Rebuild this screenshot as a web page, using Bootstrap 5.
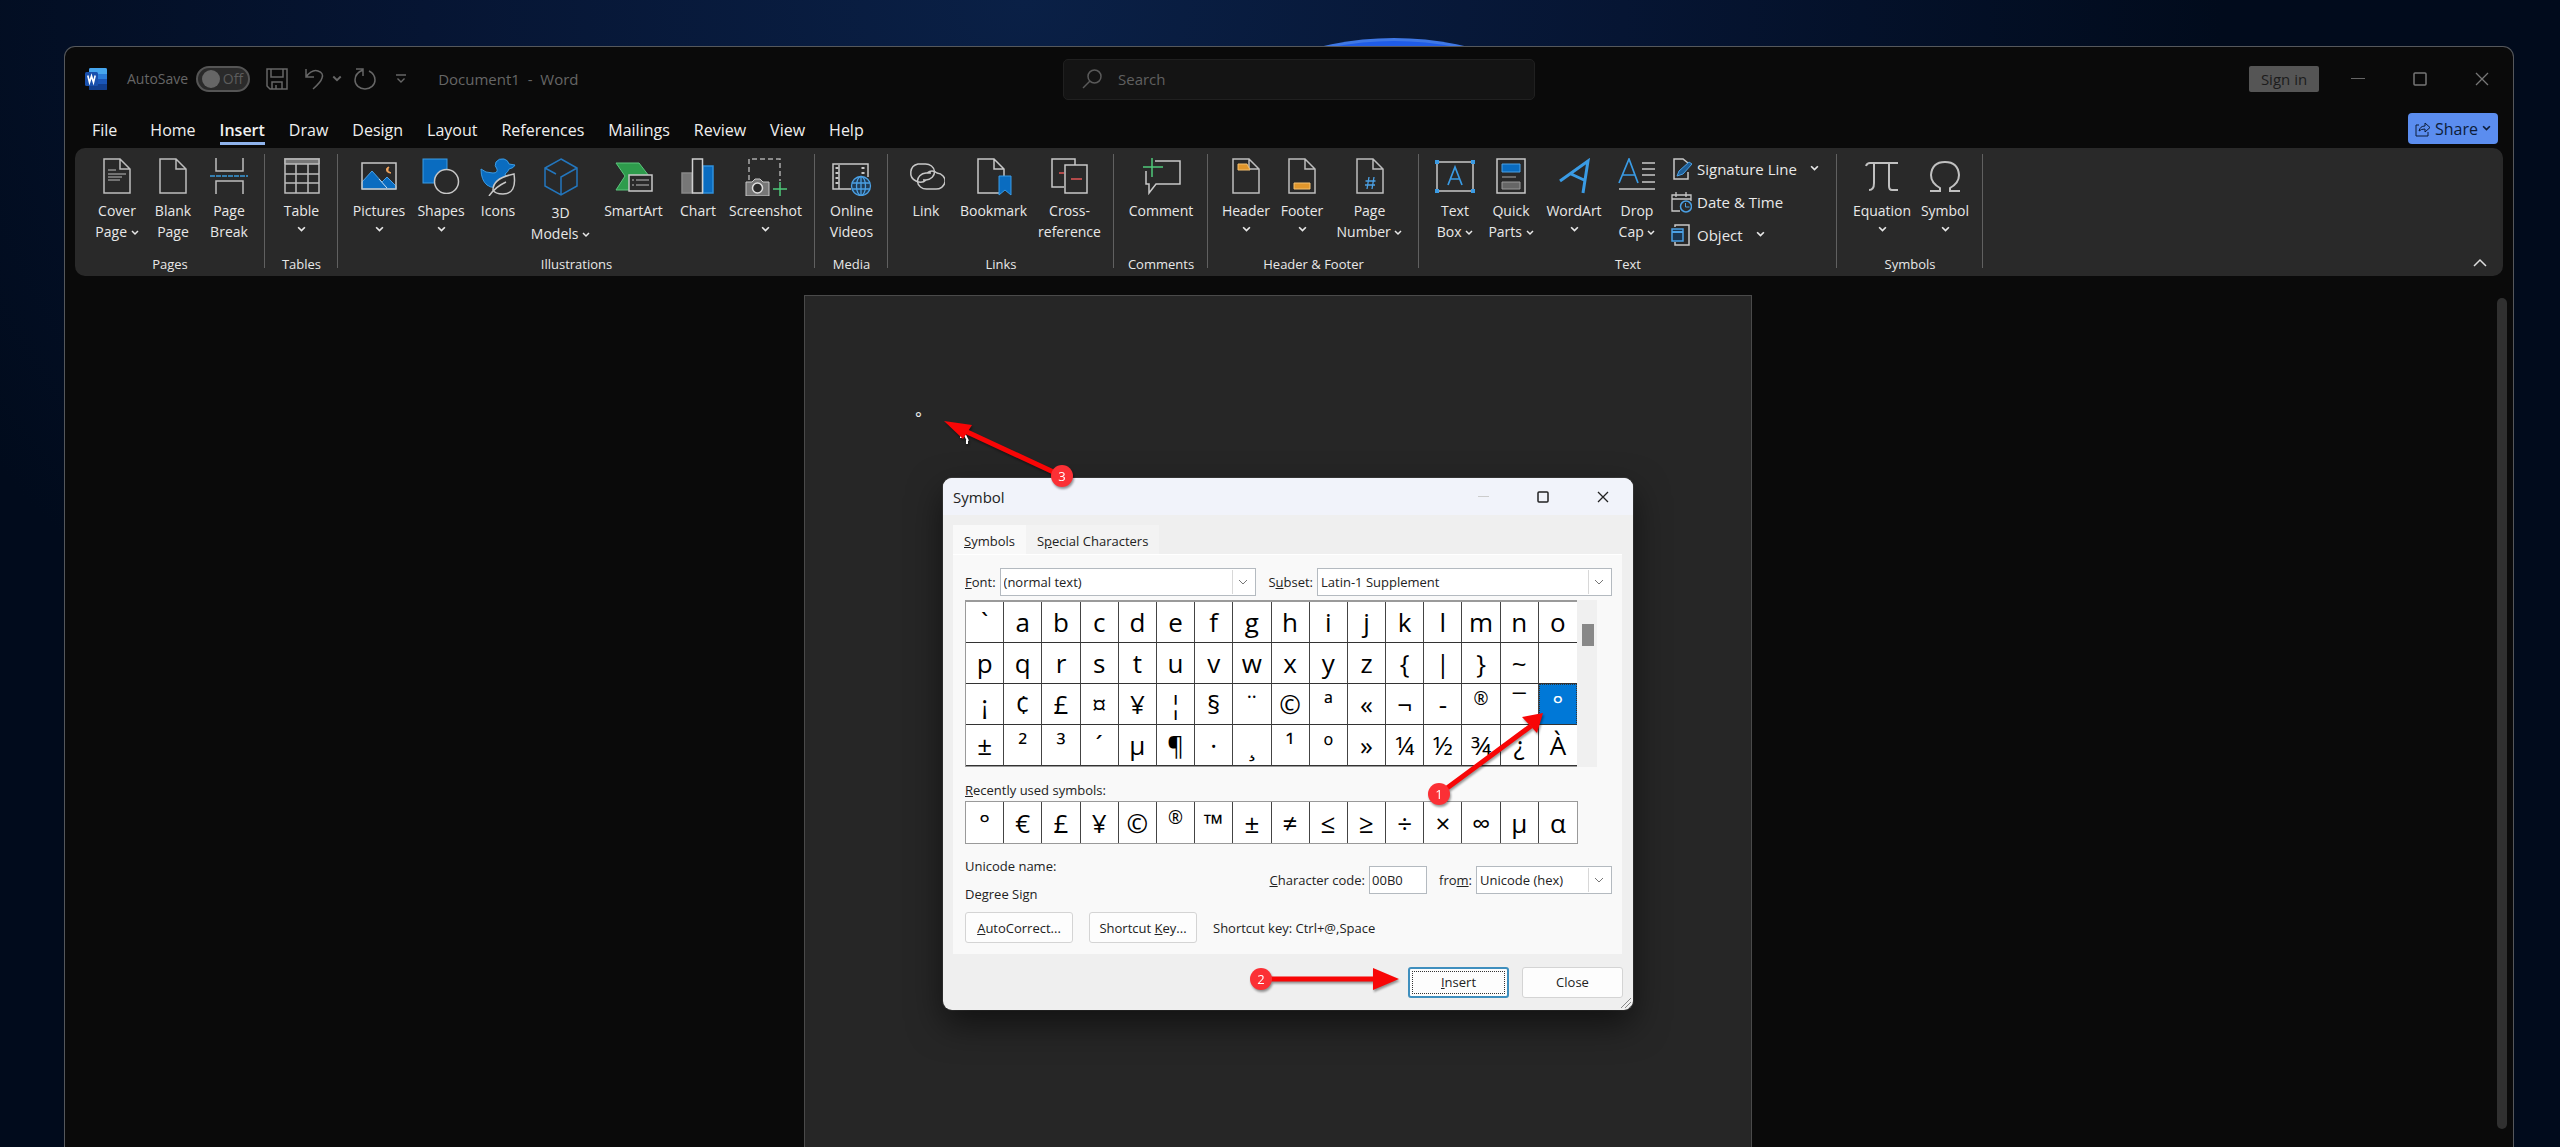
<!DOCTYPE html>
<html lang="en">
<head>
<meta charset="utf-8">
<meta name="viewport" content="width=device-width, initial-scale=1">
<title>Document1 - Word</title>
<link href="https://cdn.jsdelivr.net/npm/bootstrap@5.3.0/dist/css/bootstrap.min.css" rel="stylesheet">
<style>
  body { height: 100vh; overflow: hidden; position: relative; font-family: "Open Sans", "Noto Sans", sans-serif; font-size: 15px; line-height: 20px; color: #e8e8e8;
    background: radial-gradient(ellipse 1200px 900px at 40% 0, #0a2046 0, #061533 50%, #010b1c 100%); }
  button, input, select { font: inherit; }
  .bloom { position: absolute; left: calc(50% - 206px); top: 38px; width: 640px; height: 640px; border-radius: 50%; background: #1f5ce8; border-top: 3px solid #3f78e6; }
  .app { position: relative; margin: 46px 46px 0 64px; height: calc(100vh - 46px); background: #0a0a0a; border: 1px solid #55585c; border-bottom: 0; border-radius: 11px 11px 0 0; }
  .bare { background: none; border: 0; padding: 0; color: inherit; }
  svg { display: block; fill: none; flex: none; }

  .titlebar { display: grid; grid-template-columns: 1fr minmax(240px, 472px) 1fr; align-items: center; height: 64px; padding-left: 20px; color: #666; }
  .autosave { font-size: 14px; }
  .pill { width: 54px; height: 26px; border: 2px solid #555; border-radius: 13px; background: #2a2a2a; padding: 0 5px 0 4px; color: #5c5c5c; }
  .knob { width: 18px; height: 18px; border-radius: 50%; background: #666; }
  .searchbox { height: 41px; background: #141414; border: 1px solid #202020; border-radius: 5px; padding-left: 18px; gap: 16px; }
  .searchbox input { background: none; border: 0; outline: 0; color: #666; padding: 0; }
  .searchbox input::placeholder { color: #606060; opacity: 1; }
  .docname { white-space: pre; }
  .signin { background: #555; color: #1c1c1c; border: 0; border-radius: 2px; height: 26px; width: 70px; padding: 0; }
  .wctl { width: 62px; height: 40px; }

  .tabrow { height: 37px; padding: 2px 15px 0 27px; }
  .tabrow .nav { gap: 24px; }
  .tabrow .nav-link { color: #f0f0f0; padding: 0; height: 32px; line-height: 34px; font-size: 16px; }
  .tabrow .nav-link.first { margin-right: 9px; }
  .tabrow .nav-link.active { font-weight: 600; border-bottom: 3px solid #8fb3ec; }
  .share { background: #5b8def; color: #0c1c38; border: 0; border-radius: 4px; width: 90px; height: 31px; font-size: 16px; padding: 0; }

  .ribbon { margin: 0 10px; height: 128px; background: #292929; border-radius: 10px; position: relative; }
  .grp { padding: 10px 8px 0; position: relative; }
  .grp::after { content: ""; position: absolute; right: 0; top: 6px; bottom: 8px; width: 1px; background: #606060; }
  .grp.start { padding-left: 14px; }
  .grp.lead10 { padding-left: 10px; }
  .grp.wide { padding-left: 10px; padding-right: 10px; }
  .grp.solo { padding-left: 0; padding-right: 0; }
  .grp-name { position: absolute; left: 0; right: 0; bottom: 2px; text-align: center; font-size: 13px; }
  .rb { display: flex; flex-direction: column; align-items: center; background: none; border: 0; padding: 0; color: #e8e8e8; font-size: 14px; line-height: 21px; white-space: nowrap; height: 100px; }
  .rb > svg { margin-bottom: 6px; }
  .rb .cv { display: inline-block; }
  .xs { width: 52px; } .s { width: 56px; } .m { width: 62px; } .ml { width: 70px; } .l { width: 73px; } .x { width: 79px; } .xx { width: 94px; }
  .smallbtn { display: flex; align-items: center; height: 33px; background: none; border: 0; padding: 0; gap: 5px; color: #e8e8e8; font-size: 15px; }
  .smallcol { width: 164px; padding-left: 6px; margin-top: -6px; }
  .collapse-btn { position: absolute; right: 16px; bottom: 8px; }

  .paper { width: 948px; margin-top: 19px; background: #262626; border: 1px solid #4a4a4a; border-bottom: 0; padding: 112px 0 0 110px; font-size: 16px; color: #eee; }
  .gutter { width: 22px; padding: 22px 0 18px 6px; }
  .gutter div { width: 10px; height: 100%; border-radius: 5px; background: #303030; }

  .dlg { position: absolute; left: calc(50% - 337px); top: 478px; width: 690px; background: #efefef; border-radius: 9px; color: #222; font-size: 13px; box-shadow: 0 14px 34px rgba(0,0,0,.55), 0 0 0 1px #3a3a3a; }
  .dlg-title { height: 37px; background: #f1f3fa; border-radius: 9px 9px 0 0; padding-left: 10px; font-size: 15px; }
  .dctl { width: 60px; height: 37px; color: #222; }
  .dlg-tabs { padding: 10px 10px 0; }
  .dlg-tab { height: 29px; padding: 2px 11px 0; background: #f3f3f3; border: 0; color: #222; }
  .dlg-tab.on { background: #f9f9f9; }
  .panel { margin: 0 11px 0 10px; padding: 14px 10px 11px 12px; background: #f9f9f9; box-shadow: inset 0 1px #fff; }
  .sel { appearance: none; height: 28px; border: 1px solid #b4bac0; border-radius: 0; color: #222; padding: 0 24px 0 3px;
    background: #fff url("data:image/svg+xml,%3Csvg xmlns='http://www.w3.org/2000/svg' width='24' height='26'%3E%3Cpath d='M1.500 1v24' stroke='%23d8d8d8'/%3E%3Cpath d='M8 11l4 4 4-4' fill='none' stroke='%23777'/%3E%3C/svg%3E") no-repeat right center; }
  .sel-font { width: 256px; } .sel-sub { width: 295px; } .sel-from { width: 136px; }
  .code { width: 58px; height: 28px; border: 1px solid #b4bac0; padding: 0 2px; color: #222; background: #fff; }
  .chars { display: grid; grid-template-columns: repeat(16, 1fr); width: 612px; border: 1px solid #9a9a9a; border-top-width: 2px; border-right: 0; background: #fff; }
  .chars button { height: 41px; background: none; border: 0; border-right: 1px solid #444; border-bottom: 1px solid #333; padding: 0; font-size: 26px; line-height: 40px; color: #000; }
  .chars button:nth-child(16n) { border-right: 0; }
  .chars button.raised { font-size: 18px; line-height: 28px; padding-bottom: 12px; }
  .chars button.picked { background: #0078d7; color: #fff; outline: 1px dotted #333; outline-offset: -1px; }
  .recent { width: 613px; border: 1px solid #9a9a9a; }
  .recent button { border-bottom: 0; }
  .cscroll { width: 20px; background: #f0f0f0; padding: 24px 3px 0 5px; }
  .cscroll div { height: 22px; background: #888; }
  .lbl { line-height: 22px; }
  .names { line-height: 28px; }
  .dbtn { height: 31px; background: #fdfdfd; border: 1px solid #d4d4d4; border-radius: 3px; color: #222; padding: 0; }
  .w-side { width: 108px; } .w-foot { width: 101px; }
  .go { border: 2px solid #3f8fbe; position: relative; }
  .go::after { content: ""; position: absolute; inset: 2px; border: 1px dotted #333; }
  .dlg-foot { height: 56px; padding-right: 10px; gap: 13px; }
  .grip { position: absolute; right: 1px; bottom: 1px; }
  .notes { position: absolute; left: 0; top: 0; overflow: visible; pointer-events: none; filter: drop-shadow(1px 2px 1px rgba(0,0,0,.4)); }
  .notes text { font-size: 13px; fill: #fff; text-anchor: middle; }
</style>
</head>
<body>
<svg width="0" height="0" class="position-absolute" aria-hidden="true">
  <defs>
    <symbol id="cv" viewBox="0 0 8 8"><path d="M1 2l3 3 3-3" fill="none" stroke="currentColor" stroke-width="1.500"/></symbol>
    <symbol id="pg" viewBox="0 0 36 36"><path d="M5 1h16l10 10v24H5zM21 1v10h10" fill="none" stroke="#bdbdbd" stroke-width="1.500"/></symbol>
  </defs>
</svg>
<div class="bloom"></div>

<div class="app d-flex flex-column">
  <header class="titlebar">
    <div class="d-flex align-items-center">
      <svg width="22" height="22" viewBox="0 0 22 22"><rect x="4" width="18" height="22" rx="1.500" fill="#1a56b8"/><path d="M4 1.500Q4 0 5.500 0h15Q22 0 22 1.500V6H4z" fill="#46a6ee"/><path d="M4 6h18v5H4z" fill="#2b7cd8"/><path d="M4 16h18v4.500q0 1.500-1.500 1.500h-15Q4 22 4 20.500z" fill="#123f8f"/><rect y="4" width="13" height="14" rx="1.500" fill="#1950ad"/><path d="M2.800 7.500l1.700 7 2-6.500 2 6.500 1.700-7" stroke="#fff" stroke-width="1.600"/></svg>
      <label class="autosave d-flex align-items-center ms-3 ps-1" for="autosave">
        <span>AutoSave</span>
        <input class="visually-hidden" type="checkbox" role="switch" id="autosave">
        <span class="pill d-flex align-items-center justify-content-between ms-2"><span class="knob"></span>Off</span>
      </label>
      <button class="bare ms-3" aria-label="Save"><svg width="22" height="22" viewBox="0 0 22 22" stroke="currentColor" stroke-width="1.500"><path d="M1 1h20v20H4l-3-3zM5 1v8h12V1M6 21v-7h10v7M10 17v4"/></svg></button>
      <button class="bare ms-3" aria-label="Undo"><svg width="20" height="22" viewBox="0 0 20 22" stroke="currentColor" stroke-width="1.500"><path d="M2 1v8h8M2 9Q8 1 14 3t4 7q-1 4-9 11"/></svg></button>
      <button class="bare ms-2" aria-label="Undo list"><svg width="10" height="10"><use href="#cv"/></svg></button>
      <button class="bare ms-2 ps-1" aria-label="Repeat"><svg width="22" height="22" viewBox="0 0 22 22" stroke="currentColor" stroke-width="1.500"><path d="M2 1h7v7M9 2Q1 5 1 12a10 9 0 0 0 20 0q0-6-6-9"/></svg></button>
      <button class="bare ms-3 ps-1" aria-label="Customize toolbar"><svg width="10" height="10" viewBox="0 0 10 10" stroke="currentColor" stroke-width="1.400"><path d="M0 1h10M1.500 4.500L5 8l3.500-3.500"/></svg></button>
      <span class="docname ms-4 ps-2">Document1  -  Word</span>
    </div>
    <label class="searchbox d-flex align-items-center" for="q">
      <svg width="20" height="20" viewBox="0 0 20 20" stroke="#5a5a5a" stroke-width="1.500"><circle cx="12.500" cy="7.500" r="6.500"/><path d="M8 12l-7 7"/></svg>
      <input id="q" class="flex-fill" type="text" placeholder="Search">
    </label>
    <div class="d-flex align-items-center justify-content-end">
      <button class="signin me-2">Sign in</button>
      <button class="bare wctl" aria-label="Minimize"><svg class="mx-auto" width="14" height="14" stroke="#666"><path d="M0 6.500h14"/></svg></button>
      <button class="bare wctl" aria-label="Maximize"><svg class="mx-auto" width="14" height="14" stroke="#777" stroke-width="1.500"><rect x="1" y="1" width="12" height="12" rx="1"/></svg></button>
      <button class="bare wctl" aria-label="Close window"><svg class="mx-auto" width="14" height="14" stroke="#777" stroke-width="1.300"><path d="M1 1l12 12M13 1L1 13"/></svg></button>
    </div>
  </header>

  <div class="tabrow d-flex align-items-start">
    <nav class="nav flex-fill">
      <a class="nav-link first" href="#">File</a><a class="nav-link" href="#">Home</a><a class="nav-link active" href="#">Insert</a><a class="nav-link" href="#">Draw</a><a class="nav-link" href="#">Design</a><a class="nav-link" href="#">Layout</a><a class="nav-link" href="#">References</a><a class="nav-link" href="#">Mailings</a><a class="nav-link" href="#">Review</a><a class="nav-link" href="#">View</a><a class="nav-link" href="#">Help</a>
    </nav>
    <button class="share d-flex align-items-center justify-content-center gap-1"><svg width="16" height="16" viewBox="0 0 16 16" stroke="currentColor"><path d="M4 4H1v11h12v-4M4 10q1-5 6-5V2l5 4.500L10 11V8q-4 0-6 2z"/></svg>Share<svg width="9" height="9"><use href="#cv"/></svg></button>
  </div>

  <div class="ribbon d-flex">
    <div class="grp start d-flex">
      <button class="rb s"><svg width="36" height="36"><use href="#pg"/><path d="M9 12h8M9 16h18M9 19h14M9 22h12" stroke="#bdbdbd"/></svg><span>Cover</span><span>Page <svg class="cv" width="8" height="8"><use href="#cv"/></svg></span></button>
      <button class="rb s"><svg width="36" height="36"><use href="#pg"/></svg><span>Blank</span><span>Page</span></button>
      <button class="rb s"><svg width="38" height="36" viewBox="0 0 38 36" stroke="#bdbdbd" stroke-width="1.500"><path d="M6 0v13h27V0M6 36V23h27v13"/><path d="M0 18h38" stroke="#3a9bdc" stroke-dasharray="5 1"/></svg><span>Page</span><span>Break</span></button>
      <span class="grp-name">Pages</span>
    </div>
    <div class="grp solo d-flex">
      <button class="rb l"><svg width="36" height="36" viewBox="0 0 36 36"><path d="M0 0h36v6H0z" fill="#777"/><path d="M1 1h34v34H1zM1 6h34M1 16h34M1 25h34M12 6v29M24 6v29" stroke="#bdbdbd" stroke-width="1.500"/></svg><span>Table</span><svg class="mt-1" width="9" height="9"><use href="#cv"/></svg></button>
      <span class="grp-name">Tables</span>
    </div>
    <div class="grp wide d-flex">
      <button class="rb m"><svg width="36" height="36" viewBox="0 0 36 36"><path d="M1 31V24l10-11 10 11 5-5 9 9v3z" fill="#0a6cc0" stroke="#4ba0e4"/><path d="M18 21l8 9" stroke="#cde"/><rect x="1" y="5" width="34" height="26" stroke="#c8c8c8" stroke-width="1.500"/><path d="M28 9q-3 4 2 6-5 0-4.500-4 .5-2 2.500-2z" fill="#f2a45c" stroke="#f2a45c"/></svg><span>Pictures</span><svg class="mt-1" width="9" height="9"><use href="#cv"/></svg></button>
      <button class="rb m"><svg width="38" height="36" viewBox="0 0 38 36"><rect x="1" y="1" width="24" height="24" fill="#0a6cc0" stroke="#3a9be4"/><circle cx="24.500" cy="23.500" r="12" fill="#292929" stroke="#c8c8c8" stroke-width="1.500"/></svg><span>Shapes</span><svg class="mt-1" width="9" height="9"><use href="#cv"/></svg></button>
      <button class="rb xs"><svg width="36" height="38" viewBox="0 0 36 38" class="mb-1"><path d="M1 11q4 4 12 4 5 0 4-4-3-3-1-7 3-4 8-3 4 1 5 5l6 1q-1 3-6 4-1 3-4 5 3 6-3 11-8 5-15 0Q1 22 1 11z" fill="#0a6cc0" stroke="#3a9be4"/><path d="M34 16q3 20-11 20-8 0-10-4 0-12 21-16z" fill="#292929" stroke="#c8c8c8" stroke-width="1.500"/><path d="M9 38q6-9 17-14" stroke="#c8c8c8" stroke-width="1.500"/></svg><span>Icons</span></button>
      <button class="rb l"><svg width="36" height="38" viewBox="0 0 36 38" stroke="#2376bd" stroke-width="1.500"><path d="M18 1l16 9v18l-16 9-16-9V10zM18 37V19l16-9M2 10l11 6"/></svg><span>3D</span><span>Models <svg class="cv" width="8" height="8"><use href="#cv"/></svg></span></button>
      <button class="rb l"><svg width="38" height="36" viewBox="0 0 38 36"><path d="M1 5h23l10 13-10 14H1l9-14z" fill="#2e9c4c" stroke="#5cc47c"/><rect x="14" y="17" width="23" height="16" fill="#292929" stroke="#c8c8c8" stroke-width="1.500"/><path d="M17 22h2M21 22h13M17 27h2M21 27h13" stroke="#bbb"/></svg><span>SmartArt</span></button>
      <button class="rb s"><svg width="34" height="36" viewBox="0 0 34 36" stroke-width="1.500"><path d="M1 15h10v20H1z" fill="#777" stroke="#888"/><path d="M22 8h10v27H22z" fill="#0a6cc0" stroke="#2f90dc"/><path d="M11.500 1h10v34h-10z" fill="#292929" stroke="#d0d0d0"/></svg><span>Chart</span></button>
      <button class="rb x"><svg width="42" height="38" viewBox="0 0 42 38" class="mb-1"><path d="M4 22V1h31v22" stroke="#aaa" stroke-width="1.500" stroke-dasharray="5 3"/><path d="M1 24h6l3-3h5l3 3h6v14H1z" fill="#777" stroke="#c8c8c8"/><circle cx="12.500" cy="30" r="5" fill="#292929" stroke="#ddd" stroke-width="1.500"/><path d="M28 31h14M35 24v14" stroke="#4fc97a" stroke-width="1.500"/></svg><span>Screenshot</span><svg class="mt-1" width="9" height="9"><use href="#cv"/></svg></button>
      <span class="grp-name">Illustrations</span>
    </div>
    <div class="grp solo d-flex">
      <button class="rb l"><svg width="40" height="38" viewBox="0 0 40 38" class="mb-1"><path d="M19 31H1V6h35v13M7 7v24" stroke="#c8c8c8" stroke-width="1.500"/><path d="M5 9v20M31 9v8" stroke="#c8c8c8" stroke-width="3" stroke-dasharray="2 3"/><g stroke="#4ba0e4" stroke-width="1.300"><circle cx="29" cy="28" r="9.500" fill="#203c56"/><ellipse cx="29" cy="28" rx="4.500" ry="9.500"/><path d="M29 18v20M20 25h18M20 31h18"/></g></svg><span>Online</span><span>Videos</span></button>
      <span class="grp-name">Media</span>
    </div>
    <div class="grp lead10 d-flex">
      <button class="rb s"><svg width="38" height="36" viewBox="0 0 38 36" stroke="#c8c8c8" stroke-width="1.500"><path d="M19 22q-4 4-10 1a9 9 0 0 1 2-17h7a9 8 0 0 1 1 16h-3"/><path d="M20 15q5-4 10 0a9 8 0 0 1-2 16h-8a9 8 0 0 1-1-16h5"/></svg><span>Link</span></button>
      <button class="rb x"><svg width="38" height="38" viewBox="0 0 38 38" class="mb-1"><path d="M26 35H3V1h16l10 10v8M19 1v10h10" stroke="#c8c8c8" stroke-width="1.500"/><path d="M24 18h12v19l-6-5-6 5z" fill="#0a6cc0" stroke="#3a9be4"/></svg><span>Bookmark</span></button>
      <button class="rb l"><svg width="38" height="36" viewBox="0 0 38 36" stroke="#c8c8c8" stroke-width="1.500"><path d="M13 29H1V1h23v6M14 7h22v28H14z"/><path d="M8 15h5M20 21h11" stroke="#e05555"/></svg><span>Cross-</span><span>reference</span></button>
      <span class="grp-name">Links</span>
    </div>
    <div class="grp solo d-flex">
      <button class="rb xx"><svg width="40" height="38" viewBox="0 0 40 38" class="mb-1"><path d="M14 3h25v23H15l-7 9v-9H5V13" stroke="#c8c8c8" stroke-width="1.500"/><path d="M2 9h20M11 0v19" stroke="#4fc97a" stroke-width="1.500"/></svg><span>Comment</span></button>
      <span class="grp-name">Comments</span>
    </div>
    <div class="grp wide d-flex">
      <button class="rb s"><svg width="36" height="36"><use href="#pg"/><path d="M10 6h9l3 6H10z" fill="#e0962c" stroke="#f3c070"/></svg><span>Header</span><svg class="mt-1" width="9" height="9"><use href="#cv"/></svg></button>
      <button class="rb s"><svg width="36" height="36"><use href="#pg"/><path d="M10 25h16v6H10z" fill="#e0962c" stroke="#f3c070"/></svg><span>Footer</span><svg class="mt-1" width="9" height="9"><use href="#cv"/></svg></button>
      <button class="rb x"><svg width="36" height="36"><use href="#pg"/><path d="M17 19l-2 12M22 19l-2 12M13.500 23h10M13 27h10" stroke="#4ba0e4" stroke-width="1.300"/></svg><span>Page</span><span>Number <svg class="cv" width="8" height="8"><use href="#cv"/></svg></span></button>
      <span class="grp-name">Header &amp; Footer</span>
    </div>
    <div class="grp d-flex">
      <button class="rb s"><svg width="42" height="36" viewBox="0 0 42 36"><path d="M3 4h36v29H3z" stroke="#c8c8c8" stroke-width="1.500"/><path d="M1 2h4v4H1zM37 2h4v4h-4zM1 31h4v4H1zM37 31h4v4h-4z" fill="#3a9be4"/><path d="M14 27l7-18 7 18M16.500 21h9" stroke="#3a9be4" stroke-width="1.700"/></svg><span>Text</span><span>Box <svg class="cv" width="8" height="8"><use href="#cv"/></svg></span></button>
      <button class="rb s"><svg width="30" height="36" viewBox="0 0 30 36"><path d="M1 1h28v34H1z" stroke="#c8c8c8" stroke-width="1.500"/><path d="M6 6h18v8H6z" fill="#0a6cc0" stroke="#4ba0e4"/><path d="M6 19h14" stroke="#aaa"/><path d="M6 24h18v7H6z" fill="#666" stroke="#999"/></svg><span>Quick</span><span>Parts <svg class="cv" width="8" height="8"><use href="#cv"/></svg></span></button>
      <button class="rb ml"><svg width="34" height="36" viewBox="0 0 34 36" stroke="#3a9be4" stroke-width="3"><path d="M3 23L31 3l-5 32M14 16l13 6"/></svg><span>WordArt</span><svg class="mt-1" width="9" height="9"><use href="#cv"/></svg></button>
      <button class="rb s"><svg width="38" height="36" viewBox="0 0 38 36"><path d="M1 25L11 1l9 24M5 17h12" stroke="#3a9be4" stroke-width="1.700"/><path d="M24 5h13M24 11h13M24 17h13M24 24h13M1 31h36" stroke="#c8c8c8" stroke-width="1.500"/></svg><span>Drop</span><span>Cap <svg class="cv" width="8" height="8"><use href="#cv"/></svg></span></button>
      <div class="smallcol">
        <button class="smallbtn"><svg width="21" height="22" viewBox="0 0 21 22"><path d="M17 14v7H3V1h9l5 4" stroke="#c8c8c8" stroke-width="1.500"/><path d="M6 18l2-5L18 4l3 2-9 10z" fill="#1e5f99" stroke="#4ba0e4"/></svg>Signature Line<svg class="ms-2" width="9" height="9"><use href="#cv"/></svg></button>
        <button class="smallbtn"><svg width="21" height="22" viewBox="0 0 21 22"><path d="M9 20H1V4h19v6M1 8h19M5 1v5M15 1v5" stroke="#c8c8c8" stroke-width="1.300"/><circle cx="15" cy="15.500" r="5.500" fill="#292929" stroke="#4ba0e4" stroke-width="1.500"/><path d="M14.500 12v4h4" stroke="#4ba0e4"/></svg>Date &amp; Time</button>
        <button class="smallbtn"><svg width="21" height="22" viewBox="0 0 21 22"><path d="M4 3V1h14v20H4v-3" stroke="#c8c8c8" stroke-width="1.500"/><path d="M1 5h11v12H1z" fill="#1a3550" stroke="#4ba0e4" stroke-width="1.500"/><path d="M1 8h11" stroke="#4ba0e4" stroke-width="2"/></svg>Object<svg class="ms-2" width="9" height="9"><use href="#cv"/></svg></button>
      </div>
      <span class="grp-name">Text</span>
    </div>
    <div class="grp wide d-flex">
      <button class="rb ml"><svg width="34" height="36" viewBox="0 0 34 36" stroke="#c0c0c0" stroke-width="2"><path d="M1 8q1-3 4-3h28M9 5v20q0 7-5 7M24 5v23q0 4 3 4h6"/></svg><span>Equation</span><svg class="mt-1" width="9" height="9"><use href="#cv"/></svg></button>
      <button class="rb s"><svg width="32" height="36" viewBox="0 0 32 36" stroke="#c0c0c0" stroke-width="2"><path d="M1 33h10v-3Q2 25 2 17 3 4 16 4t14 13q0 8-9 13v3h10"/></svg><span>Symbol</span><svg class="mt-1" width="9" height="9"><use href="#cv"/></svg></button>
      <span class="grp-name">Symbols</span>
    </div>
    <button class="bare collapse-btn" aria-label="Collapse ribbon"><svg width="14" height="10" stroke="#ddd" stroke-width="1.500"><path d="M1 8l6-6 6 6"/></svg></button>
  </div>

  <main class="d-flex flex-fill">
    <div class="flex-fill d-flex justify-content-center"><div class="paper">°</div></div>
    <div class="gutter"><div></div></div>
  </main>
</div>

<section class="dlg" role="dialog" aria-label="Symbol">
  <div class="dlg-title d-flex align-items-center">
    <span class="flex-fill">Symbol</span>
    <button class="bare dctl" aria-label="Minimize dialog"><svg class="mx-auto" width="11" height="12" stroke="#ccc"><path d="M0 5.500h11"/></svg></button>
    <button class="bare dctl" aria-label="Maximize dialog"><svg class="mx-auto" width="12" height="12" stroke="#222" stroke-width="1.500"><rect x="1" y="1" width="10" height="10" rx="1"/></svg></button>
    <button class="bare dctl" aria-label="Close dialog"><svg class="mx-auto" width="12" height="12" stroke="#222" stroke-width="1.300"><path d="M1 1l10 10M11 1L1 11"/></svg></button>
  </div>
  <div class="dlg-tabs d-flex">
    <button class="dlg-tab on"><u>S</u>ymbols</button><button class="dlg-tab">S<u>p</u>ecial Characters</button>
  </div>
  <div class="panel">
    <div class="d-flex align-items-center justify-content-between mb-1">
      <div class="d-flex align-items-center gap-1"><label for="font"><u>F</u>ont:</label><select id="font" class="sel sel-font"><option>(normal text)</option></select></div>
      <div class="d-flex align-items-center gap-1"><label for="subset">S<u>u</u>bset:</label><select id="subset" class="sel sel-sub"><option>Latin-1 Supplement</option></select></div>
    </div>
    <div class="d-flex">
      <div class="chars" id="chars"></div>
      <div class="cscroll"><div></div></div>
    </div>
    <div class="lbl mt-2 pt-1"><u>R</u>ecently used symbols:</div>
    <div class="chars recent" id="recent"></div>
    <div class="d-flex justify-content-between align-items-center pt-2">
      <div class="names">Unicode name:<br>Degree Sign</div>
      <div class="d-flex align-items-center gap-1">
        <label for="code"><u>C</u>haracter code:</label><input id="code" class="code me-2" type="text" value="00B0">
        <label for="from">fro<u>m</u>:</label><select id="from" class="sel sel-from"><option>Unicode (hex)</option></select>
      </div>
    </div>
    <div class="d-flex align-items-center pt-1">
      <button class="dbtn w-side"><u>A</u>utoCorrect...</button>
      <button class="dbtn w-side mx-3">Shortcut <u>K</u>ey...</button>
      <span>Shortcut key: Ctrl+@,Space</span>
    </div>
  </div>
  <div class="dlg-foot d-flex align-items-center justify-content-end">
    <button class="dbtn w-foot go"><u>I</u>nsert</button>
    <button class="dbtn w-foot">Close</button>
  </div>
  <svg class="grip" width="12" height="12" stroke="#888"><path d="M1 11L11 1M5 11l6-6M9 11l2-2"/></svg>

  <!-- step markers: origin is the dialog's top left corner -->
  <svg class="notes" width="689" height="530" viewBox="0 0 689 530">
    <path d="M17 -41h2M22 -43l3 6M24 -38v4" stroke="#fff" stroke-width="2"/>
    <g stroke="#f80606" stroke-width="5"><path d="M119 -2L22 -47M496 316L588 248M318 501h116"/></g>
    <g fill="#f80606"><path d="M1 -57l28 4-9 14zM600 235l-6 20-15-16zM456 501l-26-11v22z"/></g>
    <g fill="#fb3035"><circle cx="119" cy="-2" r="11"/><circle cx="496" cy="316" r="11"/><circle cx="318" cy="501" r="11"/></g>
    <text x="119" y="3">3</text><text x="496" y="321">1</text><text x="318" y="506">2</text>
  </svg>
</section>

<script src="https://cdn.jsdelivr.net/npm/bootstrap@5.3.0/dist/js/bootstrap.bundle.min.js"></script>
<script>
  function fill(id, chars, picked) {
    const box = document.getElementById(id);
    for (const c of chars) {
      const b = document.createElement('button');
      b.textContent = c;
      if (c === picked) b.className = 'picked';
      if (c === '®') b.className = 'raised';
      box.append(b);
    }
  }
  fill('chars', '`abcdefghijklmnopqrstuvwxyz{|}~\u00a0¡¢£¤¥¦§¨©ª«¬-®¯°±²³´µ¶·¸¹º»¼½¾¿À', '°');
  fill('recent', '°€£¥©®™±≠≤≥÷×∞µα');
</script>
</body>
</html>
